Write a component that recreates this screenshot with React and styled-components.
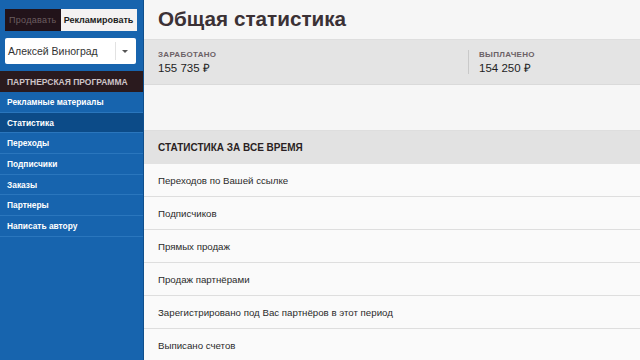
import React from 'react';
import styled, { createGlobalStyle } from 'styled-components';

const GlobalStyle = createGlobalStyle`
  html, body {
    margin: 0;
    padding: 0;
    width: 640px;
    height: 360px;
    overflow: hidden;
    background: #f6f6f6;
    font-family: "Liberation Sans", Arial, sans-serif;
  }
`;

const Layout = styled.div`
  display: grid;
  grid-template-columns: 144px 1fr;
  height: 360px;
`;

const Sidebar = styled.aside`
  background: #1764ae;
  border-right: 1px solid #0f4f8c;
  display: flex;
  flex-direction: column;
`;

const Tabs = styled.div`
  display: flex;
  margin: 9px 7px 0 5px;
  height: 22px;
`;

const Tab = styled.div`
  display: flex;
  align-items: center;
  justify-content: center;
  font-size: 9px;
  padding: 0 4px;
  background: ${(p) => (p.active ? '#f4f2f2' : '#22131a')};
  color: ${(p) => (p.active ? '#1c1c1c' : '#6b5d60')};
  font-weight: ${(p) => (p.active ? 'bold' : 'normal')};
  letter-spacing: ${(p) => (p.active ? '0' : '0.3px')};
  width: ${(p) => p.w}px;
  box-sizing: border-box;
`;

const Select = styled.div`
  display: flex;
  align-items: center;
  margin: 7px 7px 0 5px;
  height: 26px;
  background: #fff;
  border-radius: 2px;
  font-size: 10.5px;
  color: #333;
`;

const SelectText = styled.span`
  flex: 1;
  padding-left: 3px;
`;

const SelectArrow = styled.span`
  width: 18px;
  height: 18px;
  display: flex;
  align-items: center;
  justify-content: center;
  border-left: 1px solid #e2e2e2;
  margin-right: 2px;
  &::after {
    content: '';
    border-left: 3px solid transparent;
    border-right: 3px solid transparent;
    border-top: 3px solid #555;
  }
`;

const SectionHead = styled.div`
  margin-top: 7px;
  height: 21px;
  background: #2a1a1e;
  color: #cdc3c6;
  font-size: 8.5px;
  font-weight: bold;
  display: flex;
  align-items: center;
  padding-left: 7px;
`;

const Nav = styled.nav`
  display: flex;
  flex-direction: column;
`;

const NavItem = styled.a`
  height: 20.7px;
  display: flex;
  align-items: center;
  padding-left: 7px;
  font-size: 8.4px;
  font-weight: bold;
  color: #fff;
  background: ${(p) => (p.active ? '#0c4b88' : 'transparent')};
  border-bottom: 1px solid #2a76bd;
  box-sizing: border-box;
`;

const Main = styled.main`
  display: flex;
  flex-direction: column;
  background: #f6f6f6;
`;

const Title = styled.h1`
  margin: 0;
  height: 40px;
  box-sizing: border-box;
  padding: 7px 0 0 14px;
  font-size: 20.7px;
  font-weight: bold;
  color: #3b3135;
  border-bottom: 1px solid #dedede;
`;

const Totals = styled.div`
  height: 44px;
  background: #e4e4e4;
  display: grid;
  grid-template-columns: 324px 1fr;
  align-items: center;
  border-bottom: 1px solid #dadada;
`;

const Total = styled.div`
  padding-left: ${(p) => (p.split ? '10px' : '14px')};
  border-left: ${(p) => (p.split ? '1px solid #c9c9c9' : 'none')};
  height: 24px;
  display: flex;
  flex-direction: column;
  justify-content: center;
`;

const TotalLabel = styled.div`
  font-size: 8px;
  font-weight: bold;
  color: #6b6166;
  letter-spacing: 0.3px;
`;

const TotalValue = styled.div`
  font-size: 11.5px;
  color: #1e1e1e;
  margin-top: 1px;
`;

const Spacer = styled.div`
  height: 45px;
  border-bottom: 1px solid #dedede;
`;

const TableHead = styled.div`
  height: 33px;
  background: #e2e2e2;
  display: flex;
  align-items: center;
  padding-left: 14px;
  font-size: 10px;
  font-weight: bold;
  color: #2a1f22;
`;

const Row = styled.div`
  height: 33px;
  box-sizing: border-box;
  display: flex;
  align-items: center;
  padding-left: 14px;
  font-size: 9.7px;
  color: #2a2a2a;
  background: #fafafa;
  border-bottom: 1px solid #dedede;
`;

const navItems = [
  'Рекламные материалы',
  'Статистика',
  'Переходы',
  'Подписчики',
  'Заказы',
  'Партнеры',
  'Написать автору',
];

const rows = [
  'Переходов по Вашей ссылке',
  'Подписчиков',
  'Прямых продаж',
  'Продаж партнёрами',
  'Зарегистрировано под Вас партнёров в этот период',
  'Выписано счетов',
];

const App = () => (
  <>
    <GlobalStyle />
    <Layout>
      <Sidebar>
        <Tabs>
          <Tab w={56}>Продавать</Tab>
          <Tab w={76} active>
            Рекламировать
          </Tab>
        </Tabs>
        <Select>
          <SelectText>Алексей Виноград</SelectText>
          <SelectArrow />
        </Select>
        <SectionHead>ПАРТНЕРСКАЯ ПРОГРАММА</SectionHead>
        <Nav>
          {navItems.map((item) => (
            <NavItem key={item} active={item === 'Статистика'}>
              {item}
            </NavItem>
          ))}
        </Nav>
      </Sidebar>
      <Main>
        <Title>Общая статистика</Title>
        <Totals>
          <Total>
            <TotalLabel>ЗАРАБОТАНО</TotalLabel>
            <TotalValue>155 735 ₽</TotalValue>
          </Total>
          <Total split>
            <TotalLabel>ВЫПЛАЧЕНО</TotalLabel>
            <TotalValue>154 250 ₽</TotalValue>
          </Total>
        </Totals>
        <Spacer />
        <TableHead>СТАТИСТИКА ЗА ВСЕ ВРЕМЯ</TableHead>
        {rows.map((r) => (
          <Row key={r}>{r}</Row>
        ))}
      </Main>
    </Layout>
  </>
);

export default App;
